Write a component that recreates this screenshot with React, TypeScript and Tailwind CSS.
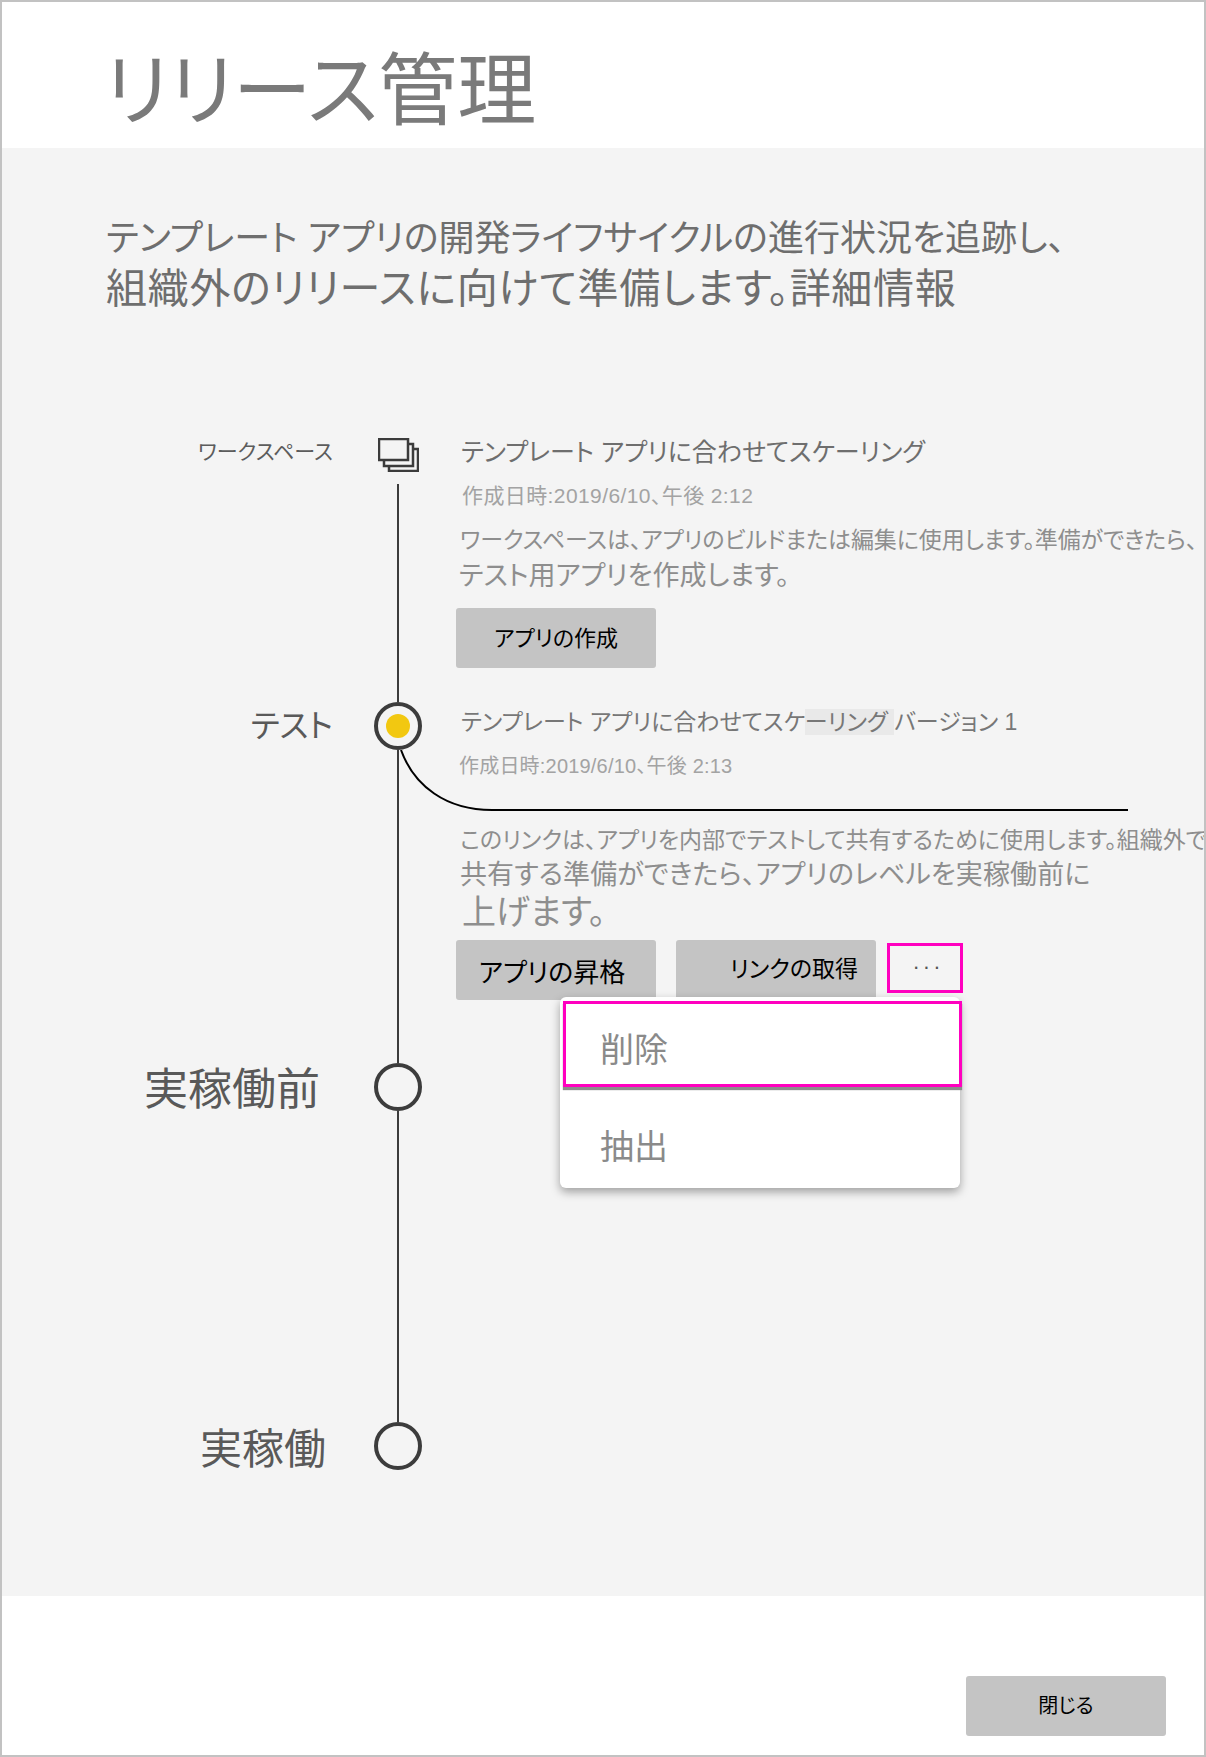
import React from 'react';

const font = "font-['Liberation_Sans','Noto_Sans_CJK_JP',sans-serif] [font-feature-settings:'palt']";

function Circle({ active }: { active?: boolean }) {
  return (
    <div className="w-12 h-12 shrink-0 rounded-full border-4 border-[#3c3c3c] flex items-center justify-center">
      {active && <div className="w-6 h-6 rounded-full bg-[#f2c811]" />}
    </div>
  );
}

function WorkspaceIcon() {
  return (
    <svg width="41" height="34" viewBox="0 0 41 34" fill="none" stroke="#3b3b3b" strokeWidth="2.5">
      <rect x="11" y="11" width="29" height="22" fill="#f4f4f4" />
      <rect x="6" y="6" width="29" height="22" fill="#f4f4f4" />
      <rect x="1" y="1" width="29" height="21" fill="#f4f4f4" />
    </svg>
  );
}

function GreyButton({ children, className }: { children: React.ReactNode; className?: string }) {
  return (
    <button className={`w-[200px] h-[60px] rounded-[3px] bg-[#c4c4c4] text-black flex items-center justify-center ${className ?? ''}`}>
      {children}
    </button>
  );
}

export default function App() {
  return (
    <div className={`w-[1206px] h-[1757px] bg-white border-2 border-[#c2c2c2] flex flex-col overflow-hidden whitespace-nowrap ${font}`}>
      {/* Header */}
      <div className="h-[146px] shrink-0 pl-[102px] pt-[42px]">
        <h1 className="text-[79px] leading-[96px] text-[#7a7a7a]">リリース管理</h1>
      </div>

      {/* Body */}
      <div className="flex-1 bg-[#f4f4f4]">
        <div className="pl-[104px] pt-[66px] leading-[50px] text-[#6e6e6e]">
          <p className="text-[36px]">テンプレート アプリの開発ライフサイクルの進行状況を追跡し、</p>
          <p className="text-[41px] tracking-[0.7px]">組織外のリリースに向けて準備します。詳細情報</p>
        </div>

        <div className="mt-[124px] grid grid-cols-[372px_48px_1fr] grid-rows-[264px_361px_359px_48px]">
          {/* Workspace */}
          <div className="pr-[41px] text-right text-[21px] leading-[28px] text-[#5c5c5c]">ワークスペース</div>
          <div className="flex flex-col items-center">
            <WorkspaceIcon />
            <div className="mt-[12px] w-0.5 flex-1 bg-[#3c3c3c]" />
          </div>
          <div className="pl-[34px]">
            <div className="pl-[5px] text-[25px] leading-[28px] text-[#6e6e6e]">テンプレート アプリに合わせてスケーリング</div>
            <div className="pl-[6px] mt-[18px] text-[21px] tracking-[0.4px] leading-[24px] text-[#a3a3a3]">作成日時:2019/6/10、午後 2:12</div>
            <div className="pl-[4px] mt-[16px] text-[23px] tracking-[-0.1px] leading-[32px] text-[#8e8e8e]">
              ワークスペースは、アプリのビルドまたは編集に使用します。準備ができたら、
            </div>
            <div className="pl-[3px] mt-[3px] text-[27px] leading-[34px] text-[#8e8e8e]">テスト用アプリを作成します。</div>
            <GreyButton className="mt-[15px] text-[22px]">アプリの作成</GreyButton>
          </div>

          {/* Test */}
          <div className="pr-[41px] text-right text-[32px] leading-[48px] text-[#595959]">テスト</div>
          <div className="flex flex-col items-center">
            <Circle active />
            <div className="w-0.5 flex-1 bg-[#3c3c3c]" />
          </div>
          <div className="relative pl-[34px]">
            <svg className="absolute left-[-22px] top-[48px]" width="730" height="62" viewBox="0 0 730 62" fill="none">
              <path d="M1 0C14 36 46 60 92 60H728" stroke="#000" strokeWidth="2" />
            </svg>
            <div className="pl-[5px] mt-[6px] text-[23px] leading-[28px] text-[#777777]">
              テンプレート アプリに合わせてスケ<span className="bg-[#e9e9e9]">ーリング </span>バージョン 1
            </div>
            <div className="pl-[3px] mt-[18px] text-[20px] tracking-[0.2px] leading-[24px] text-[#a3a3a3]">作成日時:2019/6/10、午後 2:13</div>
            <div className="pl-[4px] mt-[47px] text-[23px] leading-[30px] text-[#8e8e8e]">
              このリンクは、アプリを内部でテストして共有するために使用します。組織外で
            </div>
            <div className="pl-[4px] mt-[3px] text-[27px] tracking-[0.1px] leading-[34px] text-[#8e8e8e]">
              共有する準備ができたら、アプリのレベルを実稼働前に
            </div>
            <div className="pl-[6px] mt-[-1px] text-[34px] leading-[42px] text-[#8e8e8e]">上げます。</div>

            <div className="relative mt-[7px] flex items-start">
              <GreyButton className="text-[26px] pt-[6px] pr-[8px]">アプリの昇格</GreyButton>
              <GreyButton className="ml-5 text-[23px] pl-[36px] pb-[2px]">リンクの取得</GreyButton>
              <div className="ml-[11px] mt-[3px] w-[76px] h-[50px] border-[3px] border-[#ff00bf] flex items-center justify-center text-[#555555] text-[22px] tracking-[3px] pl-[6px] pb-[3px]">
                ···
              </div>

              {/* Overflow menu */}
              <div className="absolute left-[104px] top-[57px] w-[400px] h-[191px] rounded-md bg-white shadow-[0_4px_10px_rgba(0,0,0,0.35)] text-[34px] text-[#8a8a8a]">
                <div className="ml-[3px] mt-1 w-[399px] h-[86px] border-[3px] border-[#ff00bf] pl-[34px] pt-[12px] flex items-center shadow-[0_3px_1px_#8c8c8c] bg-white">
                  削除
                </div>
                <div className="pl-[40px] pt-[20px] h-[101px] flex items-center">抽出</div>
              </div>
            </div>
          </div>

          {/* Pre-production */}
          <div className="pr-[54px] pt-[3px] text-right text-[44px] leading-[48px] text-[#595959]">実稼働前</div>
          <div className="flex flex-col items-center">
            <Circle />
            <div className="w-0.5 flex-1 bg-[#3c3c3c]" />
          </div>
          <div />

          {/* Production */}
          <div className="pr-[48px] pt-[4px] text-right text-[42px] leading-[48px] text-[#595959]">実稼働</div>
          <Circle />
          <div />
        </div>
      </div>

      {/* Footer */}
      <div className="h-[159px] shrink-0 flex justify-end items-end pr-[38px] pb-[19px]">
        <GreyButton className="text-[20px]">閉じる</GreyButton>
      </div>
    </div>
  );
}
